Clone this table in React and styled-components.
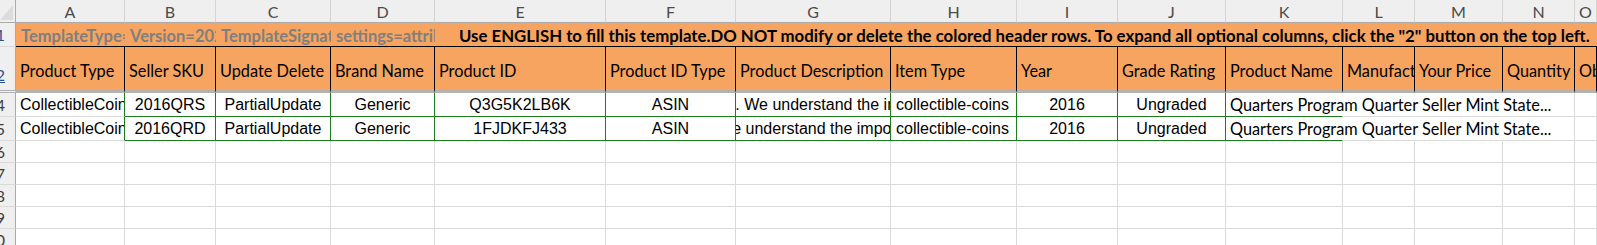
import React from "react";
import styled, { createGlobalStyle } from "styled-components";

const ORANGE = "#f6a45f";
const GREEN = "#1b801b";
const GRID = "#dadada";
const HEAD_BG = "#efefef";
const CALIBRI = `Lato, "Open Sans", sans-serif`;
const ARIAL = `"Liberation Sans", Arial, sans-serif`;

const GlobalStyle = createGlobalStyle`
  html, body {
    margin: 0;
    padding: 0;
    background: #ffffff;
  }
  body {
    font-family: ${ARIAL};
  }
`;

const columns = [
  { key: "A", width: 109 },
  { key: "B", width: 91 },
  { key: "C", width: 115 },
  { key: "D", width: 104 },
  { key: "E", width: 171 },
  { key: "F", width: 130 },
  { key: "G", width: 155 },
  { key: "H", width: 126 },
  { key: "I", width: 101 },
  { key: "J", width: 108 },
  { key: "K", width: 117 },
  { key: "L", width: 72 },
  { key: "M", width: 88 },
  { key: "N", width: 72 },
  { key: "O", width: null },
];

const templateRow = [
  "TemplateType=fptcustom",
  "Version=2023.0924",
  "TemplateSignature=Q09MTEVDVElCTEVfQ09JTlM=",
  "settings=attributeRow=3&contentLanguageTag=en_US",
];

const notice =
  'Use ENGLISH to fill this template.DO NOT modify or delete the colored header rows. To expand all optional columns, click the "2" button on the top left.';

const headers = [
  "Product Type",
  "Seller SKU",
  "Update Delete",
  "Brand Name",
  "Product ID",
  "Product ID Type",
  "Product Description",
  "Item Type",
  "Year",
  "Grade Rating",
  "Product Name",
  "Manufacturer",
  "Your Price",
  "Quantity",
  "Obverse Design",
];

const rows = [
  {
    num: 4,
    type: "CollectibleCoins",
    sku: "2016QRS",
    update: "PartialUpdate",
    brand: "Generic",
    id: "Q3G5K2LB6K",
    idType: "ASIN",
    desc: "Mint State. We understand the importance",
    item: "collectible-coins",
    year: "2016",
    grade: "Ungraded",
    name: "Quarters Program Quarter Seller Mint State...",
  },
  {
    num: 5,
    type: "CollectibleCoins",
    sku: "2016QRD",
    update: "PartialUpdate",
    brand: "Generic",
    id: "1FJDKFJ433",
    idType: "ASIN",
    desc: "Quality. We understand the importance of it",
    item: "collectible-coins",
    year: "2016",
    grade: "Ungraded",
    name: "Quarters Program Quarter Seller Mint State...",
  },
];

const emptyRows = [6, 7, 8, 9, 10];

export default function App() {
  return (
    <>
      <GlobalStyle />
      <Window>
        <Sheet>
          <Corner>
            <svg width="16" height="23" viewBox="0 0 16 23">
              <polygon points="13,5 13,20 0,20" fill="#dcdcdc" />
            </svg>
          </Corner>
          {columns.map((col) => (
            <ColHead key={col.key}>{col.key}</ColHead>
          ))}

          <RowHead $tone="blue">1</RowHead>
          {templateRow.map((text, i) => (
            <TemplateCell key={i}>{text}</TemplateCell>
          ))}
          <NoticeCell>{notice}</NoticeCell>

          <RowHead $tone="blue" $valign="flex-end" $underline $double>
            2
          </RowHead>
          {headers.map((text) => (
            <HeaderCell key={text}>{text}</HeaderCell>
          ))}

          {rows.map((r) => (
            <React.Fragment key={r.num}>
              <RowHead>{r.num}</RowHead>
              <Cell $right={GREEN}>{r.type}</Cell>
              <Cell $align="center" $right={GREEN} $bottom={GREEN}>
                {r.sku}
              </Cell>
              <Cell $align="center" $right={GREEN} $bottom={GREEN}>
                {r.update}
              </Cell>
              <Cell $align="center" $right={GREEN} $bottom={GREEN}>
                {r.brand}
              </Cell>
              <Cell $align="center" $right={GREEN} $bottom={GREEN}>
                {r.id}
              </Cell>
              <Cell $align="center" $right={GREEN} $bottom={GREEN}>
                {r.idType}
              </Cell>
              <Cell $align="center" $right={GREEN} $bottom={GREEN}>
                <Nowrap>{r.desc}</Nowrap>
              </Cell>
              <Cell $pad={5} $right={GREEN} $bottom={GREEN}>
                {r.item}
              </Cell>
              <Cell $align="center" $right={GREEN} $bottom={GREEN}>
                {r.year}
              </Cell>
              <Cell $align="center" $right={GREEN} $bottom={GREEN}>
                {r.grade}
              </Cell>
              <Cell $right="transparent" $bottom={GREEN} $spill>
                <Spill>{r.name}</Spill>
              </Cell>
              <Cell $right="transparent" />
              <Cell $right="transparent" />
              <Cell />
              <Cell />
            </React.Fragment>
          ))}

          {emptyRows.map((n) => (
            <React.Fragment key={n}>
              <RowHead>{n}</RowHead>
              {columns.map((col) => (
                <Cell key={col.key} />
              ))}
            </React.Fragment>
          ))}
        </Sheet>
      </Window>
    </>
  );
}

const Window = styled.div`
  width: 1597px;
  height: 245px;
  overflow: hidden;
  background: #ffffff;
`;

const Sheet = styled.div`
  display: grid;
  grid-template-columns: 16px ${columns
      .map((c) => (c.width ? `${c.width}px` : "1fr"))
      .join(" ")};
  grid-template-rows: 23px 24px 46px 24px 24px 22px 22px 22px 22px 22px;
  width: 1597px;
`;

const Corner = styled.div`
  background: ${HEAD_BG};
  border-right: 1px solid #ababab;
  border-bottom: 1px solid #ababab;
  box-sizing: border-box;
  overflow: hidden;
  svg {
    display: block;
  }
`;

const ColHead = styled.div`
  display: flex;
  align-items: center;
  justify-content: center;
  box-sizing: border-box;
  background: ${HEAD_BG};
  border-right: 1px solid #d4d4d4;
  border-bottom: 1px solid #ababab;
  font-family: ${CALIBRI};
  font-size: 16px;
  color: #4a4a4a;
  overflow: hidden;
`;

const RowHead = styled.div`
  display: flex;
  align-items: ${(p) => p.$valign || "center"};
  justify-content: flex-end;
  box-sizing: border-box;
  padding-right: 10px;
  padding-bottom: ${(p) => (p.$valign ? "6px" : "0")};
  background: ${HEAD_BG};
  border-right: 1px solid #ababab;
  border-bottom: ${(p) => (p.$double ? "3px double #b2b2b2" : `1px solid ${GRID}`)};
  font-family: ${CALIBRI};
  font-size: 16px;
  color: ${(p) => (p.$tone === "blue" ? "#2d4f8c" : "#3c3c3c")};
  text-decoration: ${(p) => (p.$underline ? "underline" : "none")};
  overflow: hidden;
  white-space: nowrap;
`;

const TemplateCell = styled.div`
  display: flex;
  align-items: center;
  box-sizing: border-box;
  padding: 2px 0 0 5px;
  background: ${ORANGE};
  border-bottom: 1px solid #000000;
  font-family: ${CALIBRI};
  font-weight: 700;
  font-size: 16.5px;
  color: #7f7f7f;
  white-space: nowrap;
  overflow: hidden;
`;

const NoticeCell = styled(TemplateCell)`
  grid-column: 6 / -1;
  padding-left: 24px;
  font-size: 16.8px;
  color: #000000;
`;

const HeaderCell = styled.div`
  display: flex;
  align-items: center;
  box-sizing: border-box;
  padding: 3px 0 0 4px;
  background: ${ORANGE};
  border-right: 1px solid #000000;
  border-bottom: 3px double #b2b2b2;
  font-family: ${CALIBRI};
  font-size: 16.3px;
  color: #000000;
  white-space: nowrap;
  overflow: hidden;
`;

const Cell = styled.div`
  display: flex;
  align-items: center;
  justify-content: ${(p) => (p.$align === "center" ? "center" : "flex-start")};
  box-sizing: border-box;
  padding-left: ${(p) => (p.$align === "center" ? 0 : p.$pad || 4)}px;
  background: #ffffff;
  border-right: 1px solid ${(p) => p.$right || GRID};
  border-bottom: 1px solid ${(p) => p.$bottom || GRID};
  font-family: ${ARIAL};
  font-size: 16px;
  color: #000000;
  white-space: nowrap;
  overflow: ${(p) => (p.$spill ? "visible" : "hidden")};
`;

const Nowrap = styled.span`
  flex: none;
  white-space: nowrap;
`;

const Spill = styled.span`
  position: relative;
  z-index: 1;
  font-family: ${CALIBRI};
  font-size: 16.3px;
`;
